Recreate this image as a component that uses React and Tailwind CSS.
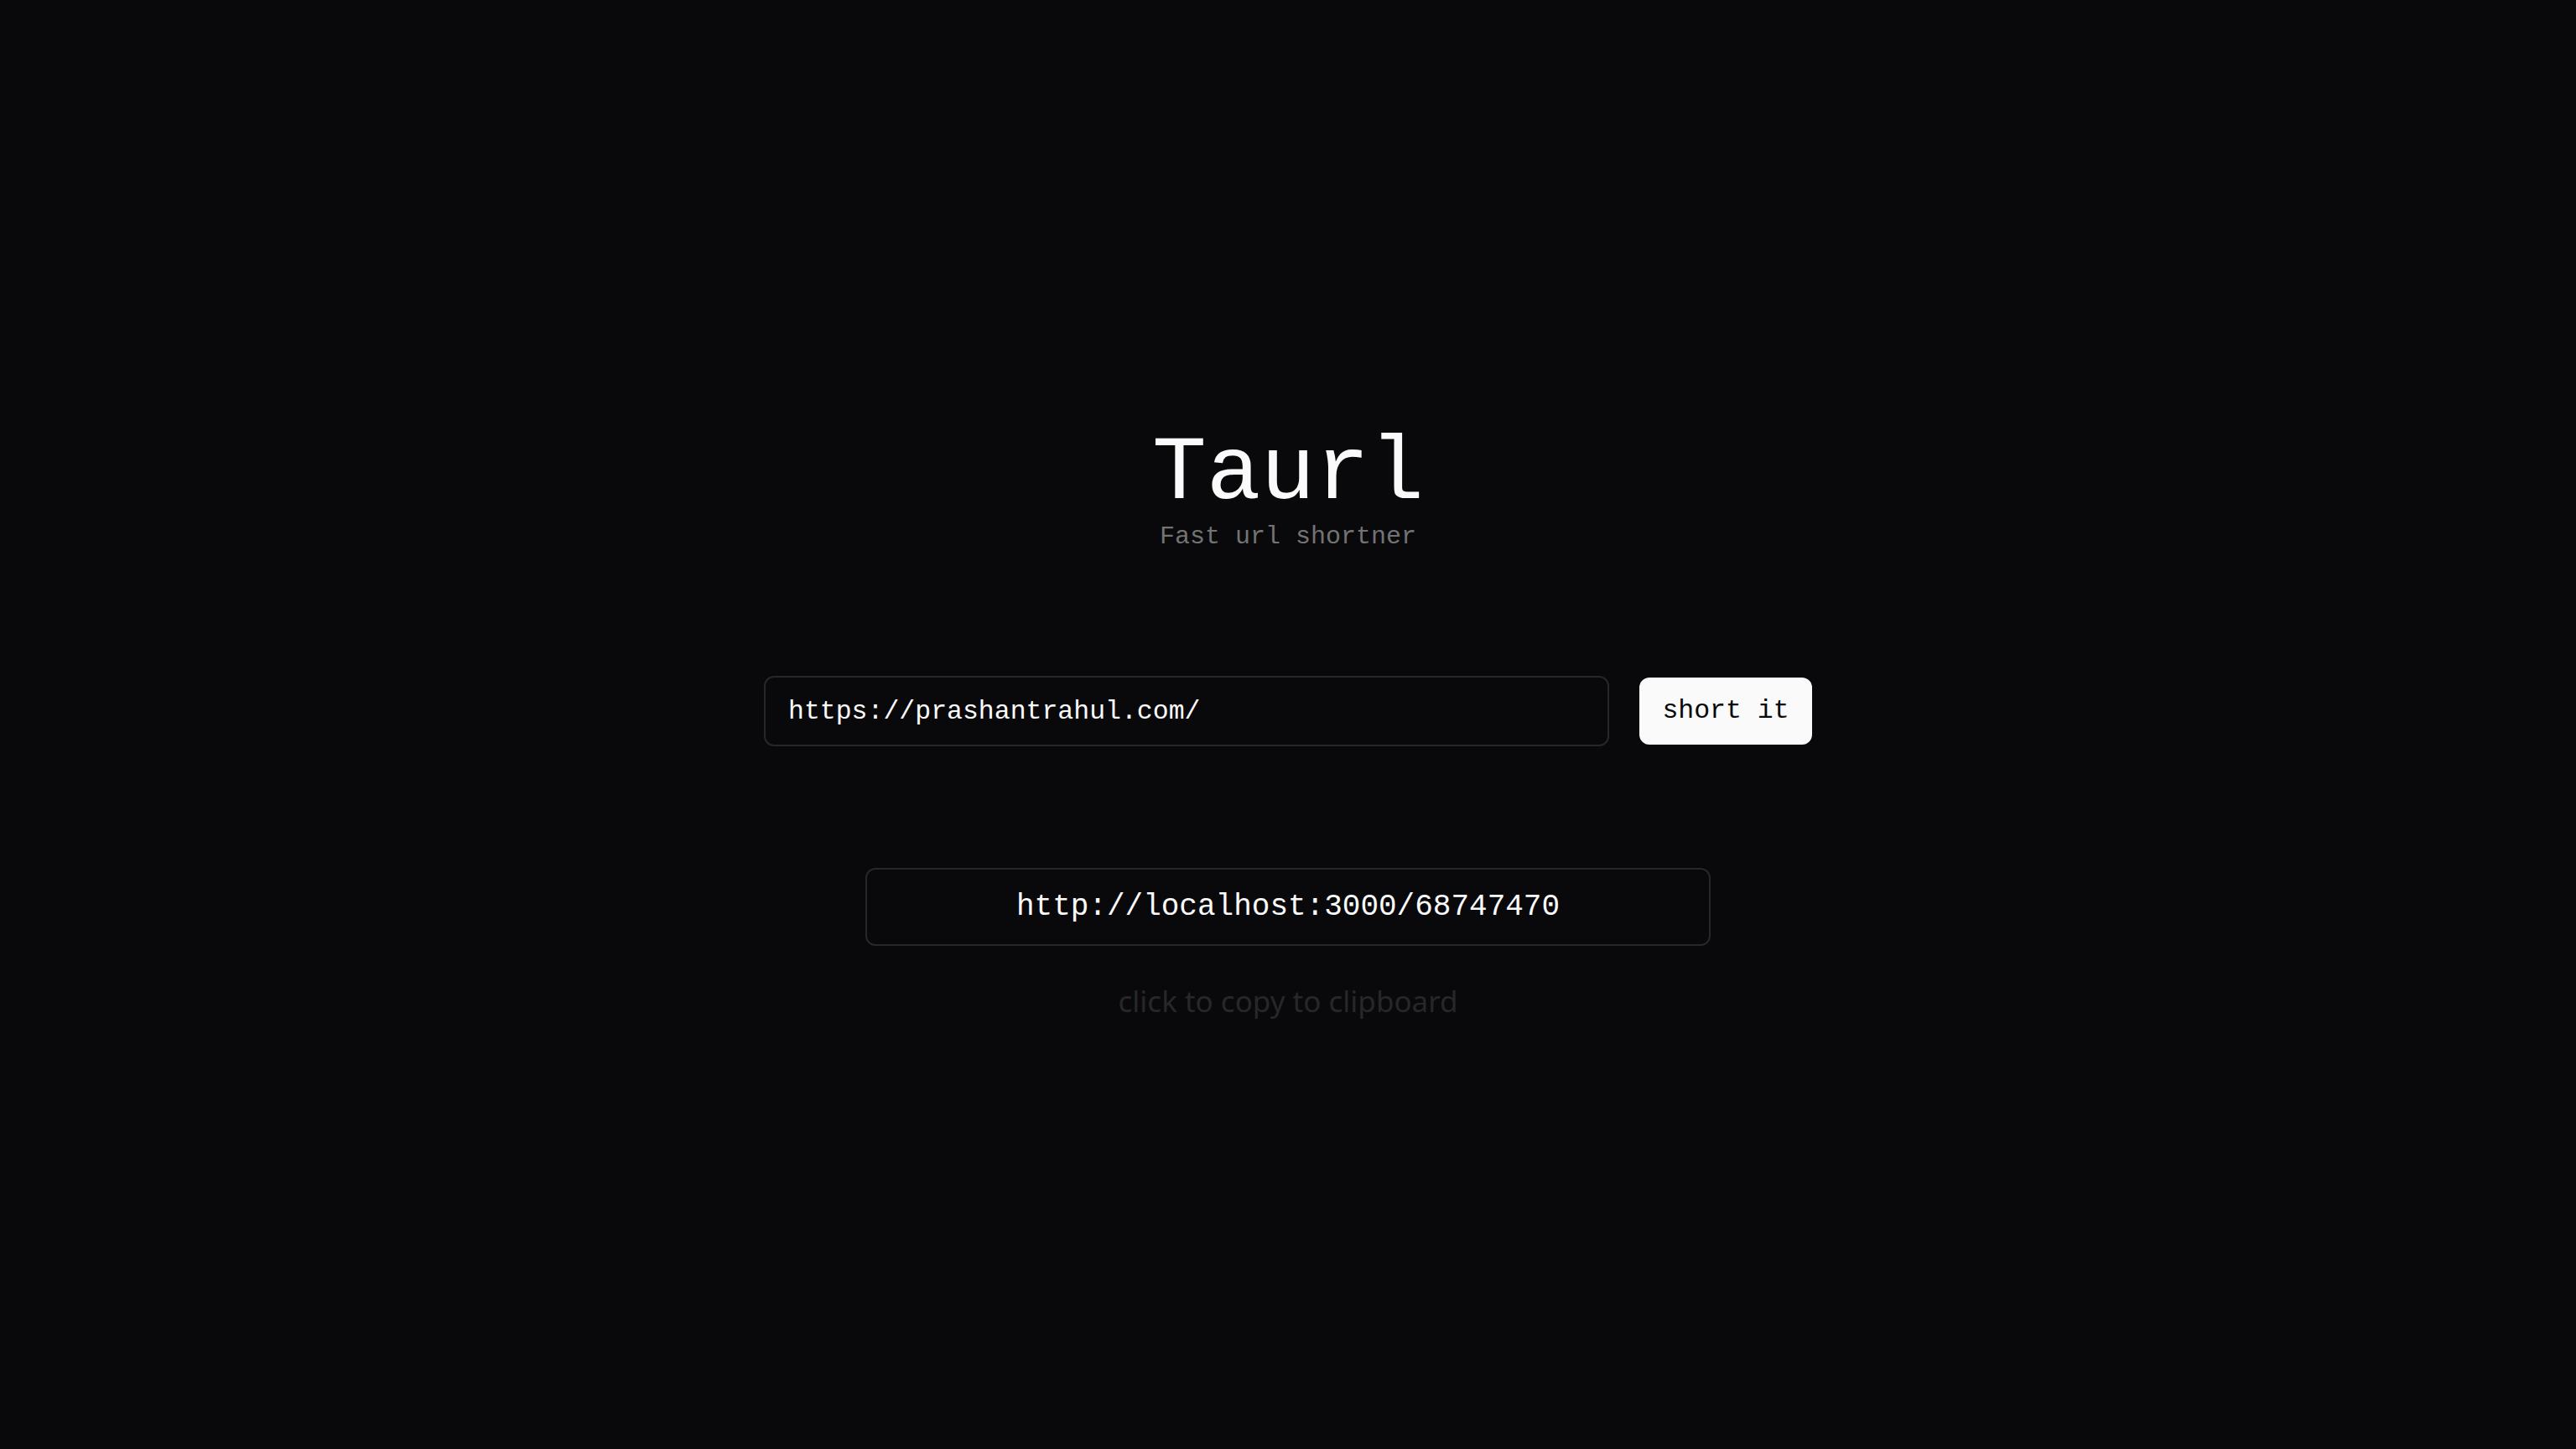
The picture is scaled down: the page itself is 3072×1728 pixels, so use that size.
export default function App() {
  return (
    <div className="min-h-screen w-full bg-[#09090b] flex flex-col items-center font-['Liberation_Mono',monospace]">
      <h1 className="mt-[511px] text-[108px] leading-none text-[#fafafa] font-normal">Taurl</h1>
      <p className="mt-[6px] text-[30px] leading-none text-[#737373]">Fast url shortner</p>
      <div className="mt-[151px] flex items-center gap-[36px]">
        <input
          type="text"
          defaultValue="https://prashantrahul.com/"
          className="w-[1008px] h-[84px] rounded-[12px] border-2 border-[#27272a] bg-transparent pl-[27px] pr-[25px] text-[31.5px] text-[#fafafa] outline-none font-['Liberation_Mono',monospace]"
        />
        <button className="w-[206px] h-[80px] rounded-[12px] bg-[#fafafa] text-[31.5px] text-[#09090b] font-['Liberation_Mono',monospace]">
          short it
        </button>
      </div>
      <div className="mt-[145px] w-[1008px] h-[93px] rounded-[12px] border-2 border-[#27272a] flex items-center justify-center text-[36px] text-[#fafafa]">
        http://localhost:3000/68747470
      </div>
      <p className="mt-[48px] text-[35px] leading-none text-[#27272a] font-['Noto_Sans',sans-serif]">click to copy to clipboard</p>
    </div>
  );
}
